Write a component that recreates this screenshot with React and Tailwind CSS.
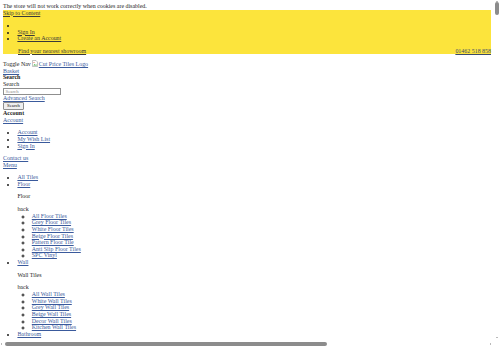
import React from "react"

const link = "underline text-[#3a5a9c]"
const hdrLink = "underline text-[#3a3a3a]"

function BrokenImg() {
  return (
    <svg width="6" height="7" viewBox="0 0 12 14" className="inline-block align-[-1px] mr-[0.5px]">
      <path d="M1 1h7l3 3v9H1z" fill="#fff" stroke="#8a8a8a" strokeWidth="1" />
      <path d="M2.5 11l2.5-3 2 2 1.5-1.5 1.5 2.5z" fill="#4caf50" />
      <circle cx="4" cy="5" r="1.1" fill="#e05a47" />
    </svg>
  )
}

function SubMenu({ title, items }) {
  return (
    <div>
      <p className="my-[5.9px]">{title}</p>
      <div>back</div>
      <ul className="list-[circle] pl-[14.4px]">
        {items.map((t) => (
          <li key={t}>
            <a className={link}>{t}</a>
          </li>
        ))}
      </ul>
    </div>
  )
}

export default function App() {
  return (
    <div className="relative h-[348px] w-[500px] overflow-hidden bg-white font-['Liberation_Serif',serif] text-[5.95px] leading-[6.66px] text-[#1c1c1c]">
      <div className="w-[494px] px-[3px] pt-[3px]">
        <div>The store will not work correctly when cookies are disabled.</div>

        {/* header panel */}
        <div className="bg-[#fce43c]">
          <a className={hdrLink}>Skip to Content</a>
          <ul className="list-disc pl-[14.4px] my-[5.75px]">
            <li>&nbsp;</li>
            <li>
              <a className={hdrLink}>Sign In</a>
            </li>
            <li>
              <a className={hdrLink}>Create an Account</a>
            </li>
          </ul>
          <div className="flex justify-between pl-[15px]">
            <a className={hdrLink}>Find your nearest showroom</a>
            <a className="underline text-[#3a4a6c]">01462 518 858</a>
          </div>
        </div>

        <div className="mt-[3.8px] h-[9.5px] flex items-end">
          <span>Toggle Nav&nbsp;</span>
          <a className={link}>
            <BrokenImg />
            Cut Price Tiles Logo
          </a>
        </div>
        <div>
          <a className={link}>Basket</a>
        </div>

        {/* search */}
        <div className="font-bold">Search</div>
        <div>Search</div>
        <div className="mt-[0.5px] h-[6.8px] w-[58px] border border-[#8f8f8f] bg-white px-[1.5px] text-[4.8px] leading-[5px] text-[#8a8a8a]">
          Search
        </div>
        <div>
          <a className={link}>Advanced Search</a>
        </div>
        <div className="mt-[0.5px] mb-[0.5px] inline-flex h-[7.5px] w-[21px] items-center justify-center rounded-[1px] border border-[#8f8f8f] bg-[#efefef] text-[4.8px] leading-[5px] text-[#111]">
          Search
        </div>

        {/* account */}
        <div className="font-bold">Account</div>
        <div>
          <a className={link}>Account</a>
        </div>
        <ul className="list-disc pl-[14.4px] my-[5.75px]">
          <li>
            <a className={link}>Account</a>
          </li>
          <li>
            <a className={link}>My Wish List</a>
          </li>
          <li>
            <a className={link}>Sign In</a>
          </li>
        </ul>
        <div>
          <a className={link}>Contact us</a>
        </div>
        <div>
          <a className={link}>Menu</a>
        </div>

        {/* navigation */}
        <ul className="list-disc pl-[14.4px] my-[5.9px]">
          <li>
            <a className={link}>All Tiles</a>
          </li>
          <li>
            <a className={link}>Floor</a>
            <SubMenu
              title="Floor"
              items={[
                "All Floor Tiles",
                "Grey Floor Tiles",
                "White Floor Tiles",
                "Beige Floor Tiles",
                "Pattern Floor Tile",
                "Anti Slip Floor Tiles",
                "SPC Vinyl",
              ]}
            />
          </li>
          <li>
            <a className={link}>Wall</a>
            <SubMenu
              title="Wall Tiles"
              items={[
                "All Wall Tiles",
                "White Wall Tiles",
                "Grey Wall Tiles",
                "Beige Wall Tiles",
                "Decor Wall Tiles",
                "Kitchen Wall Tiles",
              ]}
            />
          </li>
          <li>
            <a className={link}>Bathroom</a>
          </li>
        </ul>
      </div>

      {/* vertical scrollbar */}
      <div className="absolute right-0 top-0 flex h-[339px] w-[6px] flex-col items-center bg-white">
        <div className="mt-[0.5px] h-0 w-0 border-x-[1.5px] border-b-[1.5px] border-x-transparent border-b-[#777]" />
        <div className="mt-[0.5px] h-[13px] w-[3.5px] rounded-full bg-[#8c8c8c]" />
        <div className="flex-1" />
        <div className="mb-[1px] h-0 w-0 border-x-[1.5px] border-t-[1.5px] border-x-transparent border-t-[#777]" />
      </div>

      {/* horizontal scrollbar */}
      <div className="absolute bottom-0 left-0 flex h-[9px] w-[500px] items-center bg-white px-[1px]">
        <div className="h-0 w-0 border-y-[1.5px] border-r-[1.5px] border-y-transparent border-r-[#777]" />
        <div className="ml-[3px] h-[4px] w-[322px] rounded-full bg-[#8c8c8c]" />
        <div className="flex-1" />
        <div className="mr-[8px] h-0 w-0 border-y-[1.5px] border-l-[1.5px] border-y-transparent border-l-[#777]" />
      </div>
    </div>
  )
}
